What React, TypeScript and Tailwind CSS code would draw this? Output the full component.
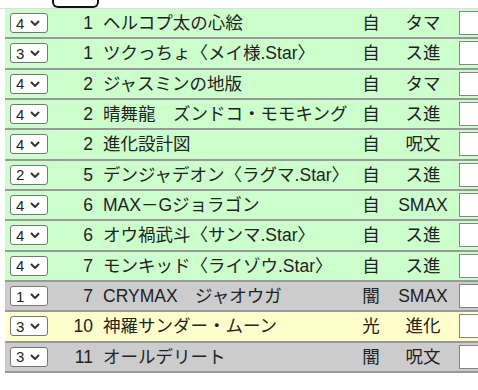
import React from "react";

type Row = {
    qty: number;
    cost: number;
    name: string;
    civ: string;
    kind: string;
    bg: string;
};

const rows: Row[] = [
    { qty: 4, cost: 1, name: "ヘルコプ太の心絵", civ: "自", kind: "タマ", bg: "bg-[#ccffcc]" },
    { qty: 3, cost: 1, name: "ツクっちょ〈メイ様.Star〉", civ: "自", kind: "ス進", bg: "bg-[#ccffcc]" },
    { qty: 4, cost: 2, name: "ジャスミンの地版", civ: "自", kind: "タマ", bg: "bg-[#ccffcc]" },
    { qty: 4, cost: 2, name: "晴舞龍　ズンドコ・モモキング", civ: "自", kind: "ス進", bg: "bg-[#ccffcc]" },
    { qty: 4, cost: 2, name: "進化設計図", civ: "自", kind: "呪文", bg: "bg-[#ccffcc]" },
    { qty: 2, cost: 5, name: "デンジャデオン〈ラグマ.Star〉", civ: "自", kind: "ス進", bg: "bg-[#ccffcc]" },
    { qty: 4, cost: 6, name: "MAX－Gジョラゴン", civ: "自", kind: "SMAX", bg: "bg-[#ccffcc]" },
    { qty: 4, cost: 6, name: "オウ禍武斗〈サンマ.Star〉", civ: "自", kind: "ス進", bg: "bg-[#ccffcc]" },
    { qty: 4, cost: 7, name: "モンキッド〈ライゾウ.Star〉", civ: "自", kind: "ス進", bg: "bg-[#ccffcc]" },
    { qty: 1, cost: 7, name: "CRYMAX　ジャオウガ", civ: "闇", kind: "SMAX", bg: "bg-[#cccccc]" },
    { qty: 3, cost: 10, name: "神羅サンダー・ムーン", civ: "光", kind: "進化", bg: "bg-[#ffffcc]" },
    { qty: 3, cost: 11, name: "オールデリート", civ: "闇", kind: "呪文", bg: "bg-[#cccccc]" },
];

function QtySelect({ value }: { value: number }) {
    return (
        <div className="flex h-[20px] w-[38px] items-center justify-between rounded-[3px] border border-[#767676] bg-white pl-[5px] pr-[7px] text-[15px] leading-none text-[#222]">
            <span>{value}</span>
            <svg width="10" height="6" viewBox="0 0 10 6" fill="none">
                <path d="M1 1 L5 5 L9 1" stroke="#333" strokeWidth="2" />
            </svg>
        </div>
    );
}

export default function App() {
    return (
        <div className="h-[390px] w-[478px] overflow-hidden bg-white font-['Liberation_Sans','Noto_Sans_CJK_JP',sans-serif] text-[#222]">
            {/* top of the button scrolled out of view */}
            <div className="h-[8px] pl-[52px]">
                <div className="h-[8px] w-[47px] rounded-b-[6px] border-x-2 border-b-2 border-[#111]" />
            </div>
            <div className="h-px bg-[#dddddd]" />
            <div className="ml-[5px] w-[520px]">
                {rows.map((r, i) => (
                    <div key={i} className={`flex h-[30.33px] items-center border-b-2 border-[#999999] ${r.bg}`}>
                        <div className="w-[48px] pl-[5px]">
                            <QtySelect value={r.qty} />
                        </div>
                        <div className="w-[44px] pr-[4px] text-right text-[17.5px]">{r.cost}</div>
                        <div className="w-[255px] pl-[6px] text-[17.5px] whitespace-nowrap">{r.name}</div>
                        <div className="w-[38px] text-center text-[17.5px]">{r.civ}</div>
                        <div className="w-[66px] text-center text-[17.5px]">{r.kind}</div>
                        <div className="pl-[3px]">
                            <div className="h-[24px] w-[60px] border border-[#858585] bg-white" />
                        </div>
                    </div>
                ))}
            </div>
        </div>
    );
}
